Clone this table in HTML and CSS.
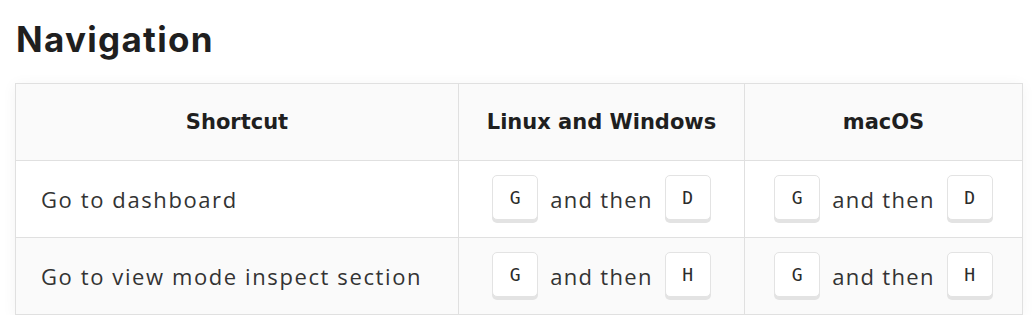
FILE: index.html
```html
<!DOCTYPE html>
<html lang="en">
<head>
<meta charset="utf-8">
<title>Navigation shortcuts</title>
<link rel="stylesheet" href="styles.css">
</head>
<body>
<main class="doc">
  <h2 class="doc-title">Navigation</h2>
  <div class="table-wrap">
    <table class="shortcuts">
      <colgroup>
        <col class="col-action">
        <col class="col-linux">
        <col class="col-mac">
      </colgroup>
      <thead>
        <tr>
          <th>Shortcut</th>
          <th>Linux and Windows</th>
          <th>macOS</th>
        </tr>
      </thead>
      <tbody>
        <tr>
          <td class="action">Go to dashboard</td>
          <td class="keys"><span class="combo"><kbd>G</kbd><span>and then</span><kbd>D</kbd></span></td>
          <td class="keys"><span class="combo"><kbd>G</kbd><span>and then</span><kbd>D</kbd></span></td>
        </tr>
        <tr>
          <td class="action">Go to view mode inspect section</td>
          <td class="keys"><span class="combo"><kbd>G</kbd><span>and then</span><kbd>H</kbd></span></td>
          <td class="keys"><span class="combo"><kbd>G</kbd><span>and then</span><kbd>H</kbd></span></td>
        </tr>
      </tbody>
    </table>
  </div>
</main>
</body>
</html>
```
FILE: styles.css
```css
html, body {
  margin: 0;
  padding: 0;
  background: #ffffff;
}

.doc {
  padding: 15px 13px 0 15px;
  font-family: "Open Sans", "DejaVu Sans", sans-serif;
  color: #333333;
}

.doc-title {
  margin: 0 0 20px 1px;
  font-family: Inter, "Noto Sans", sans-serif;
  font-weight: 700;
  font-size: 35px;
  line-height: 48px;
  letter-spacing: 1.3px;
  color: #1f1f1f;
}

.table-wrap {
  width: 1007px;
  box-shadow: 0 2px 14px rgba(0, 0, 0, 0.05);
}

.shortcuts {
  width: 100%;
  border-collapse: collapse;
  table-layout: fixed;
  font-size: 22px;
  line-height: 30px;
}

.col-action { width: 443px; }
.col-linux { width: 286px; }
.col-mac { width: 278px; }

.shortcuts th,
.shortcuts td {
  border: 1px solid #e0e0e0;
  height: 77px;
  padding: 0 25px;
  box-sizing: border-box;
}

.shortcuts th {
  background: #fafafa;
  font-family: "DejaVu Sans", "Noto Sans", sans-serif;
  font-weight: 700;
  font-size: 21px;
  color: #1f1f1f;
  text-align: center;
}

.shortcuts tbody tr:nth-child(even) td {
  background: #fafafa;
}

.shortcuts tbody tr:nth-child(odd) td {
  background: #ffffff;
}

.action {
  text-align: left;
  letter-spacing: 1.6px;
  padding-bottom: 2px;
}

.keys {
  text-align: center;
}

.combo {
  display: inline-flex;
  align-items: center;
  gap: 12px;
  letter-spacing: 1.3px;
}

kbd {
  display: inline-flex;
  align-items: center;
  justify-content: center;
  width: 46px;
  height: 45px;
  box-sizing: border-box;
  border: 1px solid #e3e3e3;
  border-radius: 5px;
  background: #ffffff;
  box-shadow: 0 3px 0 #e3e3e3;
  margin-bottom: 3px;
  font-family: "DejaVu Sans Mono", "Liberation Mono", monospace;
  font-size: 18px;
  letter-spacing: 0;
  color: #2b2b2b;
}
```
